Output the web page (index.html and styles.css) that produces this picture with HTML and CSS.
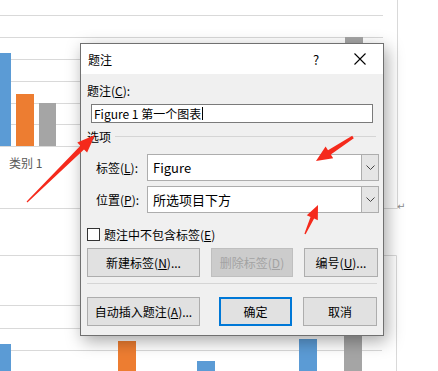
FILE: index.html
```html
<!DOCTYPE html>
<html lang="zh-CN">
<head>
<meta charset="utf-8">
<title>题注</title>
<link rel="stylesheet" href="styles.css">
</head>
<body>
<div class="page">
  <svg class="doc" width="438" height="371" viewBox="0 0 438 371">
    <g stroke="#d9d9d9" stroke-width="1" fill="none">
      <line x1="0" y1="15.5" x2="383" y2="15.5"/>
      <line x1="0" y1="37.5" x2="383" y2="37.5"/>
      <line x1="0" y1="59.5" x2="383" y2="59.5"/>
      <line x1="0" y1="81.5" x2="383" y2="81.5"/>
      <line x1="0" y1="103.5" x2="383" y2="103.5"/>
      <line x1="0" y1="124.5" x2="383" y2="124.5"/>
      <line x1="0" y1="146.5" x2="383" y2="146.5"/>
      <polyline points="0,208.5 397.5,208.5 397.5,0"/>
      <polyline points="0,255.5 396.5,255.5 396.5,371"/>
      <line x1="0" y1="305.5" x2="382" y2="305.5"/>
      <line x1="0" y1="328.5" x2="382" y2="328.5"/>
      <line x1="0" y1="350.5" x2="382" y2="350.5"/>
    </g>
    <rect x="0" y="53" width="11" height="93" fill="#5b9bd5"/>
    <rect x="16" y="94" width="18" height="52" fill="#ed7d31"/>
    <rect x="39" y="103" width="17" height="43" fill="#a5a5a5"/>
    <rect x="345" y="37" width="18" height="109" fill="#a5a5a5"/>
    <text x="9" y="168" class="cat">类别 1</text>
    <text x="397" y="210" class="ret">↵</text>
    <rect x="0" y="344" width="11" height="27" fill="#5b9bd5"/>
    <rect x="118" y="341" width="18" height="30" fill="#ed7d31"/>
    <rect x="197" y="361" width="18" height="10" fill="#5b9bd5"/>
    <rect x="299" y="339" width="18" height="32" fill="#5b9bd5"/>
    <rect x="344" y="330" width="18" height="41" fill="#a5a5a5"/>
  </svg>

  <div class="dialog">
    <div class="titlebar">
      <span class="title">题注</span>
      <span class="tb-btn help">?</span>
      <span class="tb-btn close">
        <svg width="12" height="12" viewBox="0 0 12 12"><path d="M0.5 0.5 L11.5 11.5 M11.5 0.5 L0.5 11.5" stroke="#000" stroke-width="1.1" fill="none"/></svg>
      </span>
    </div>
    <div class="body">
      <div class="caption-label">题注(<u>C</u>):</div>
      <div class="text-input">Figure 1 第一个图表<span class="caret"></span></div>
      <div class="group-head"><span>选项</span><span class="rule"></span></div>
      <div class="field-row">
        <span class="field-label">标签(<u>L</u>):</span>
        <div class="combo"><span class="combo-text">Figure</span><span class="combo-btn"><svg width="9" height="5" viewBox="0 0 9 5"><path d="M0.5 0.5 L4.5 4.5 L8.5 0.5" stroke="#444" fill="none"/></svg></span></div>
      </div>
      <div class="field-row second">
        <span class="field-label">位置(<u>P</u>):</span>
        <div class="combo"><span class="combo-text">所选项目下方</span><span class="combo-btn"><svg width="9" height="5" viewBox="0 0 9 5"><path d="M0.5 0.5 L4.5 4.5 L8.5 0.5" stroke="#444" fill="none"/></svg></span></div>
      </div>
      <div class="check-row"><span class="checkbox"></span><span>题注中不包含标签(<u>E</u>)</span></div>
      <div class="btn-row">
        <span class="btn w113">新建标签(<u>N</u>)...</span>
        <span class="btn w81 disabled">删除标签(<u>D</u>)</span>
        <span class="btn w74">编号(<u>U</u>)...</span>
      </div>
      <div class="sep"></div>
      <div class="btn-row last">
        <span class="btn w113">自动插入题注(<u>A</u>)...</span>
        <span class="btn w73 primary">确定</span>
        <span class="btn w74">取消</span>
      </div>
    </div>
  </div>

  <svg class="arrows" width="438" height="371" viewBox="0 0 438 371">
    <g fill="#f52a1c">
      <polygon points="26.6,201.6 80.4,145.8 77.3,142.6 95,135 87.1,152.6 84.0,149.4 27.4,202.4"/>
      <polygon points="352.2,135.7 328.0,150.2 325.6,146.4 316,161 333.2,158.2 330.8,154.4 353.8,138.3"/>
      <polygon points="304.4,233.7 310.5,217.0 306.8,215.3 318,205 317.8,220.3 314.1,218.6 305.6,234.3"/>
    </g>
  </svg>
</div>
</body>
</html>
```

FILE: styles.css
```css
* { box-sizing: border-box; }
html, body { margin: 0; padding: 0; background: #fff; }
body {
  font-family: "Noto Sans CJK SC", "Noto Sans", sans-serif;
  font-size: 12px;
  color: #000;
}
.page {
  position: relative;
  width: 438px;
  height: 371px;
  overflow: hidden;
}
.doc { display: block; }
.cat { font-family: "Noto Sans CJK SC", sans-serif; font-size: 12px; fill: #595959; }
.ret { font-family: "DejaVu Sans", sans-serif; font-size: 10px; fill: #8a8a8a; }

.dialog {
  position: absolute;
  left: 80px;
  top: 43px;
  width: 304px;
  height: 293px;
  border: 1px solid #707070;
  background: #f0f0f0;
  box-shadow: 3px 5px 16px rgba(0,0,0,0.35);
  display: flex;
  flex-direction: column;
}
.titlebar {
  height: 30px;
  background: #fff;
  display: flex;
  align-items: center;
}
.title { padding-left: 7px; flex: 1; font-size: 12px; }
.tb-btn {
  width: 46px;
  height: 30px;
  display: flex;
  align-items: center;
  justify-content: center;
}
.help { font-size: 13px; padding-left: 4px; }

.body { padding: 0 0 0 6px; }
.caption-label { margin-top: 8px; line-height: 18px; height: 18px; }
.text-input {
  margin: 4px 0 0 4px;
  width: 282px;
  height: 19px;
  border: 1px solid #7a7a7a;
  background: #fff;
  padding-left: 2px;
  line-height: 17px;
  display: flex;
  align-items: center;
  white-space: nowrap;
}
.caret { display: inline-block; width: 1px; height: 13px; background: #000; margin-left: 1px; }
.group-head {
  margin-top: 5px;
  height: 16px;
  display: flex;
  align-items: center;
}
.group-head .rule { flex: 1; height: 1px; background: #d5d5d5; margin: 0 7px 0 4px; }

.field-row {
  margin-top: 10px;
  padding-left: 9px;
  display: flex;
  align-items: center;
  height: 27px;
}
.field-row.second { margin-top: 5px; }
.field-label { width: 51px; }
.combo {
  width: 232px;
  height: 27px;
  border: 1px solid #adadad;
  background: #fff;
  display: flex;
  align-items: stretch;
}
.combo-text { flex: 1; padding-left: 5px; display: flex; align-items: center; font-size: 13px; }
.combo-btn {
  width: 17px;
  background: #e5e5e5;
  border-left: 1px solid #adadad;
  display: flex;
  align-items: center;
  justify-content: center;
}
.check-row {
  margin-top: 14px;
  height: 14px;
  display: flex;
  align-items: center;
  gap: 4px;
}
.checkbox { width: 13px; height: 13px; border: 1px solid #333; background: #fff; }

.btn-row { margin-top: 7px; display: flex; gap: 11px; height: 29px; }
.btn-row.last { margin-top: 13px; gap: 0; }
.btn-row.last .primary { margin-left: 19px; margin-right: 11px; }
.btn {
  height: 29px;
  border: 1px solid #adadad;
  background: #e1e1e1;
  display: flex;
  align-items: center;
  justify-content: center;
  white-space: nowrap;
}
.w113 { width: 113px; }
.w81 { width: 82px; }
.w74 { width: 74px; }
.w73 { width: 73px; }
.disabled { background: #cccccc; border-color: #bfbfbf; color: #a3a3a3; }
.primary { border: 2px solid #0078d7; }
.sep { margin-top: 6px; width: 290px; height: 1px; background: #d5d5d5; }

.arrows { position: absolute; left: 0; top: 0; pointer-events: none; }
```
